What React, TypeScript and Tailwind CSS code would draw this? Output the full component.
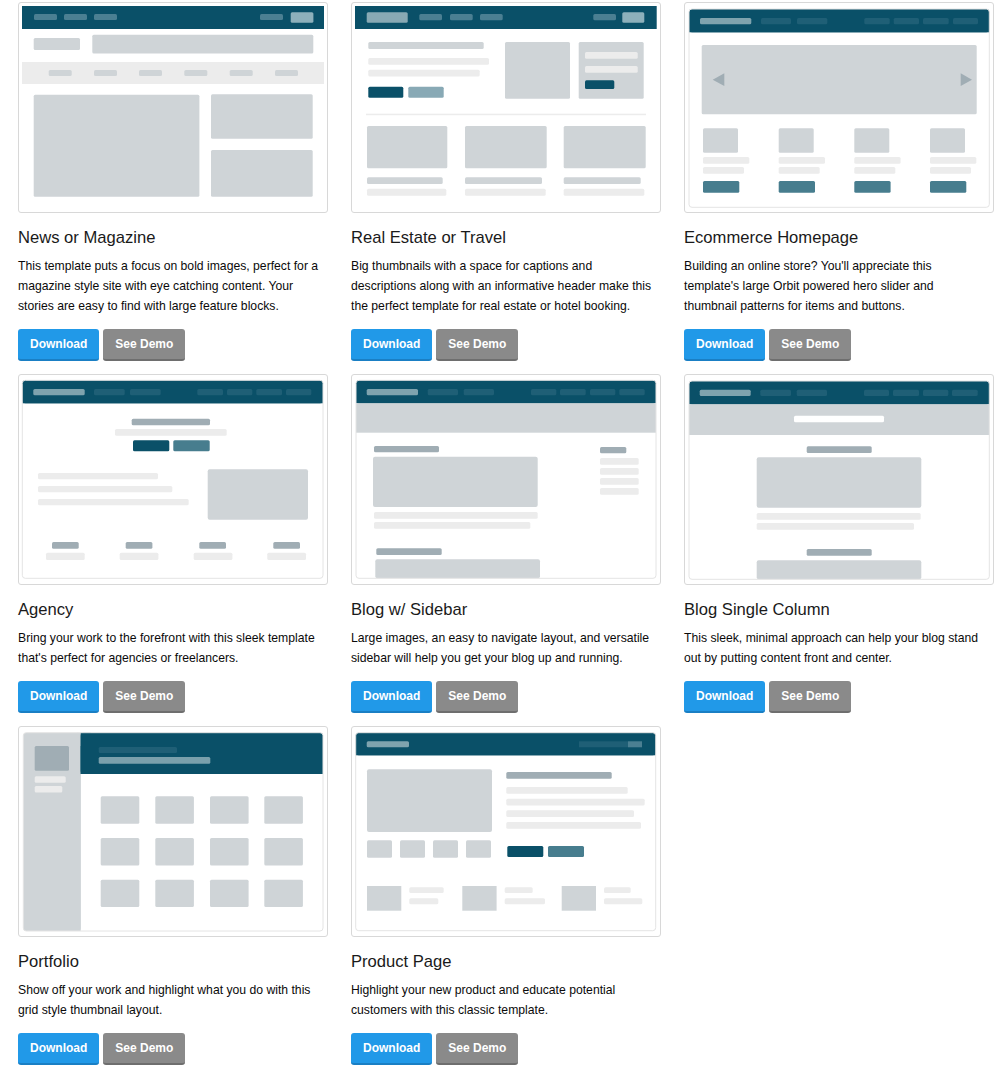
import type { ReactNode } from 'react';

const teal = '#0a5068';
const pill = '#4b7f92';
const pillDim = '#1f5f76';
const logo = '#7fa3ae';
const lightBtn = '#8db0bb';
const grey = '#cfd4d7';
const line = '#ececec';
const dark = '#a0adb4';
const tealBtn = '#477d8e';
const frameStroke = '#e4e4e4';

// one rounded block of the wireframe drawings
function B({ x, y, w, h, c = grey, r = 1.5 }: { x: number; y: number; w: number; h: number; c?: string; r?: number }) {
  return <rect x={x} y={y} width={w} height={h} rx={r} fill={c} />;
}

function Art({ children }: { children: ReactNode }) {
  return (
    <svg width="308" height="209" viewBox="1 1 308 209" className="block">
      {children}
    </svg>
  );
}

// framed page with a rounded teal header
function Frame({ x, y, w, h, hh, children }: { x: number; y: number; w: number; h: number; hh: number; children?: ReactNode }) {
  return (
    <>
      <rect x={x} y={y} width={w} height={h} rx={3} fill="#fff" />
      <rect x={x} y={y} width={w} height={hh} rx={3} fill={teal} />
      <rect x={x} y={y + 3} width={w} height={hh - 3} fill={teal} />
      {children}
      <rect x={x} y={y} width={w} height={h} rx={3} fill="none" stroke={frameStroke} strokeWidth={1} />
    </>
  );
}

function NewsArt() {
  return (
    <Art>
      <rect x={4} y={4} width={302} height={23} fill={teal} />
      {[16, 46, 76, 242].map((x) => (
        <B key={x} x={x} y={12} w={23} h={6} c={pill} />
      ))}
      <B x={272.7} y={10.3} w={22.7} h={10.4} c={lightBtn} />
      <B x={15.7} y={36} w={46.3} h={12} />
      <B x={74.3} y={32.7} w={221} h={18.7} />
      <rect x={4} y={60} width={302} height={22} fill={line} />
      {[30.7, 76, 121, 166.3, 211.7, 257].map((x) => (
        <B key={x} x={x} y={68} w={23} h={6} />
      ))}
      <B x={15.7} y={92.7} w={165.7} h={102} />
      <B x={193} y={92.3} w={101.7} h={44.4} />
      <B x={193} y={148} w={101.7} h={46.7} />
    </Art>
  );
}

function RealEstateArt() {
  return (
    <Art>
      <rect x={4} y={4} width={301.7} height={23} fill={teal} />
      <B x={15.7} y={10.3} w={41} h={10.4} c="#88a9b4" />
      {[68.3, 99, 129, 242.3].map((x) => (
        <B key={x} x={x} y={12} w={22.7} h={6.3} c={pill} />
      ))}
      <B x={271.3} y={10.3} w={22} h={10.4} c={lightBtn} />
      <B x={17.3} y={40} w={115.4} h={7} />
      <B x={17.3} y={56} w={120.7} h={6.7} c={line} />
      <B x={17.3} y={67.7} w={111.4} h={6.7} c={line} />
      <B x={17.3} y={84.7} w={35} h={11} c={teal} />
      <B x={57.3} y={84.7} w={35.4} h={11} c="#88a9b5" />
      <B x={154} y={40} w={65} h={56.7} />
      <B x={227.7} y={40} w={65} h={56.7} />
      <B x={234} y={50} w={52.7} h={6.7} c={line} />
      <B x={234} y={64} w={52.7} h={6.7} c={line} />
      <B x={234} y={78.3} w={29.3} h={8.7} c={teal} />
      <rect x={15} y={111.7} width={280} height={1.5} fill={line} />
      {[
        [16, 80.3, 75.7, 79.3],
        [114, 81.7, 77, 80.7],
        [212.7, 82, 77, 80.6],
      ].map(([x, w, t, l]) => (
        <g key={x}>
          <B x={x} y={124} w={w} h={42.3} />
          <B x={x} y={175.3} w={t} h={6.7} />
          <B x={x} y={186.7} w={l} h={7} c={line} />
        </g>
      ))}
    </Art>
  );
}

function EcommerceArt() {
  return (
    <Art>
      <Frame x={5} y={7} w={300.3} h={198.3} hh={23.3}>
        <B x={16} y={16} w={51.3} h={6.3} c={logo} />
        {[
          [77, 30],
          [113, 30.3],
          [180.3, 25.4],
          [209.7, 25.3],
          [239, 25.7],
          [269, 25],
        ].map(([x, w]) => (
          <B key={x} x={x} y={16} w={w} h={6.3} c={pillDim} />
        ))}
        <B x={17.7} y={43} w={275} h={69.3} />
        <polygon points="28.7,77.7 40.3,71.3 40.3,84" fill={dark} />
        <polygon points="276.7,71.3 288,77.7 276.7,84" fill={dark} />
        {[19, 94.7, 170.3, 246].map((x) => (
          <g key={x}>
            <B x={x} y={126.3} w={35} h={24.4} />
            <B x={x} y={155} w={46.3} h={6.7} c={line} />
            <B x={x} y={165} w={41} h={6.7} c={line} />
            <B x={x} y={179} w={36.3} h={11.7} c={tealBtn} />
          </g>
        ))}
      </Frame>
    </Art>
  );
}

function AgencyArt() {
  return (
    <Art>
      <Frame x={4.3} y={6.3} w={300.7} h={198} hh={23}>
        <B x={15.3} y={15} w={51.4} h={6.3} c={logo} />
        {[
          [76, 30.7],
          [112, 30.7],
          [179.3, 25.7],
          [209, 25.3],
          [238.3, 25.7],
          [268, 25.3],
        ].map(([x, w]) => (
          <B key={x} x={x} y={15} w={w} h={6.3} c={pillDim} />
        ))}
        <B x={113.7} y={44.7} w={78.3} h={6.6} c={dark} />
        <B x={97} y={55} w={111.7} h={6.7} c={line} />
        <B x={115} y={66.3} w={36.3} h={11} c={teal} />
        <B x={155.3} y={66.3} w={36.4} h={11} c={tealBtn} />
        <B x={20} y={99} w={120} h={6.3} c={line} />
        <B x={20} y={112} w={134.3} h={6.3} c={line} />
        <B x={20} y={125} w={150.7} h={6.3} c={line} />
        <B x={189.7} y={95.3} w={100.3} h={50.4} r={2} />
        {[
          [34, 28],
          [107.7, 101.7],
          [181.3, 175.7],
          [255.3, 249.3],
        ].map(([p, l]) => (
          <g key={p}>
            <B x={p} y={168} w={26.7} h={6.7} c={dark} />
            <B x={l} y={178.7} w={38.7} h={7.3} c={line} />
          </g>
        ))}
      </Frame>
    </Art>
  );
}

function BlogSidebarArt() {
  return (
    <Art>
      <Frame x={5} y={6.3} w={300} h={198} hh={23}>
        <B x={15.7} y={15} w={51.3} h={6.3} c={logo} />
        {[
          [76.7, 30.3],
          [112.7, 30.3],
          [180, 25.3],
          [209, 25.7],
          [239, 25.3],
          [268.3, 25.4],
        ].map(([x, w]) => (
          <B key={x} x={x} y={15} w={w} h={6.3} c={pillDim} />
        ))}
        <rect x={5} y={29.3} width={300} height={29.4} fill={grey} />
        <B x={23} y={72} w={65} h={6.3} c={dark} />
        <B x={22} y={82.7} w={164.7} h={50.3} r={2} />
        <B x={23} y={138} w={163.7} h={6.7} c={line} />
        <B x={23} y={148} w={156.3} h={6.7} c={line} />
        <B x={25.3} y={174.3} w={65.4} h={6.7} c={dark} />
        <B x={24.3} y={185.3} w={164.7} h={19} r={2} />
        <B x={249} y={73} w={26.3} h={6.3} c={dark} />
        {[84, 94, 104, 114].map((y) => (
          <B key={y} x={249} y={y} w={38.7} h={6.7} c={line} />
        ))}
      </Frame>
    </Art>
  );
}

function BlogSingleArt() {
  return (
    <Art>
      <Frame x={5} y={7} w={300.3} h={198.3} hh={23.3}>
        <B x={15.7} y={15.7} w={51} h={6.3} c={logo} />
        {[
          [76.3, 30.7],
          [112.7, 30.3],
          [180, 25],
          [209, 26],
          [239, 25.3],
          [268, 25.7],
        ].map(([x, w]) => (
          <B key={x} x={x} y={15.7} w={w} h={6.3} c={pillDim} />
        ))}
        <rect x={5} y={30.3} width={300.3} height={30.7} fill={grey} />
        <B x={110} y={41.7} w={90} h={6.6} c="#fff" />
        <B x={122.7} y={72.3} w={65} h={6.7} c={dark} />
        <B x={72.7} y={83.3} w={164.6} h={50.4} r={2} />
        <B x={72.7} y={139} w={164} h={6.7} c={line} />
        <B x={72.7} y={149} w={157.3} h={6.7} c={line} />
        <B x={122.7} y={175} w={65} h={6.7} c={dark} />
        <B x={72.7} y={186.3} w={164.6} h={19} r={2} />
      </Frame>
    </Art>
  );
}

function PortfolioArt() {
  return (
    <Art>
      <rect x={5.3} y={6.7} width={299.7} height={198.3} rx={3} fill="#fff" />
      <rect x={5.3} y={6.7} width={57.4} height={198.3} rx={3} fill={grey} />
      <rect x={59} y={6.7} width={3.7} height={198.3} fill={grey} />
      <rect x={62.7} y={6.7} width={242.3} height={41.3} rx={3} fill={teal} />
      <rect x={62.7} y={6.7} width={10} height={41.3} fill={teal} />
      <rect x={62.7} y={20} width={242.3} height={28} fill={teal} />
      <B x={16.7} y={20} w={34.3} h={24.7} c={dark} />
      <B x={16.7} y={50.3} w={31} h={6.4} c={line} />
      <B x={16.7} y={60} w={27.6} h={6.4} c={line} />
      <B x={80.7} y={21} w={78.3} h={6} c={pillDim} />
      <B x={80.7} y={31} w={111.6} h={6.7} c="#7aa0ac" />
      {[70.3, 112, 153.7].map((y) =>
        [82.7, 137.3, 192, 246.3].map((x) => <B key={`${x}-${y}`} x={x} y={y} w={38.6} h={27.4} />),
      )}
      <rect x={5.3} y={6.7} width={299.7} height={198.3} rx={3} fill="none" stroke={frameStroke} />
    </Art>
  );
}

function ProductArt() {
  return (
    <Art>
      <Frame x={4.7} y={6.7} w={300} h={198} hh={22.6}>
        <B x={15.7} y={15.3} w={42.3} h={6} c={logo} />
        <rect x={228} y={15.3} width={49} height={6} fill={pillDim} />
        <rect x={277} y={15.3} width={14} height={6} fill={pill} />
        <B x={16} y={43.3} w={125} h={62.7} r={2} />
        {[16, 49, 82, 115].map((x) => (
          <B key={x} x={x} y={114.3} w={25} h={17.4} />
        ))}
        <B x={155.3} y={46} w={105.4} h={6.7} c={dark} />
        <B x={155.3} y={61} w={121.4} h={6.7} c={line} />
        <B x={155.3} y={72.7} w={138.4} h={6.7} c={line} />
        <B x={155.3} y={84.3} w={127.7} h={6.7} c={line} />
        <B x={155.3} y={96} w={134.7} h={6.7} c={line} />
        <B x={156.3} y={120} w={36} h={11} c={teal} />
        <B x={197} y={120} w={36} h={11} c={tealBtn} />
        {[
          [16, 58.3, 34.4, 29],
          [111.3, 153.7, 28, 40.3],
          [210.7, 253, 26.7, 38.3],
        ].map(([x, lx, w1, w2]) => (
          <g key={x}>
            <rect x={x} y={160} width={34.3} height={24.7} fill={grey} />
            <B x={lx} y={161.3} w={w1} h={5.7} c={line} />
            <B x={lx} y={172.3} w={w2} h={6} c={line} />
          </g>
        ))}
      </Frame>
    </Art>
  );
}

// descriptions keep the line breaks of the original page
const templates = [
  {
    title: 'News or Magazine',
    desc: [
      'This template puts a focus on bold images, perfect for a',
      'magazine style site with eye catching content. Your',
      'stories are easy to find with large feature blocks.',
    ],
    art: <NewsArt />,
  },
  {
    title: 'Real Estate or Travel',
    desc: [
      'Big thumbnails with a space for captions and',
      'descriptions along with an informative header make this',
      'the perfect template for real estate or hotel booking.',
    ],
    art: <RealEstateArt />,
  },
  {
    title: 'Ecommerce Homepage',
    desc: [
      "Building an online store? You'll appreciate this",
      "template's large Orbit powered hero slider and",
      'thumbnail patterns for items and buttons.',
    ],
    art: <EcommerceArt />,
  },
  {
    title: 'Agency',
    desc: ['Bring your work to the forefront with this sleek template', "that's perfect for agencies or freelancers."],
    art: <AgencyArt />,
  },
  {
    title: 'Blog w/ Sidebar',
    desc: ['Large images, an easy to navigate layout, and versatile', 'sidebar will help you get your blog up and running.'],
    art: <BlogSidebarArt />,
  },
  {
    title: 'Blog Single Column',
    desc: ['This sleek, minimal approach can help your blog stand', 'out by putting content front and center.'],
    art: <BlogSingleArt />,
  },
  {
    title: 'Portfolio',
    desc: ['Show off your work and highlight what you do with this', 'grid style thumbnail layout.'],
    art: <PortfolioArt />,
  },
  {
    title: 'Product Page',
    desc: ['Highlight your new product and educate potential', 'customers with this classic template.'],
    art: <ProductArt />,
  },
];

export default function App() {
  return (
    <div className="min-h-screen bg-white font-['Liberation_Sans',Arial,sans-serif] text-[#0a0a0a]">
      <div className="grid grid-cols-[repeat(3,310px)] items-start gap-x-[23px] gap-y-[13px] pl-[18px] pt-[2px]">
        {templates.map((t) => (
          <div key={t.title} className="flex flex-col items-start">
            <div className="h-[211px] w-[310px] rounded-[3px] border border-[#d8d8d8] bg-white">{t.art}</div>
            <h3 className="mt-[15px] text-[16.6px] leading-[20px] font-normal text-[#1a1a1a]">{t.title}</h3>
            <p className="mt-[8px] text-[12.2px] leading-[20px] whitespace-nowrap">
              {t.desc.map((l, i) => (
                <span key={i} className="block">
                  {l}
                </span>
              ))}
            </p>
            <div className="mt-[13px] flex gap-[4px]">
              <button className="h-[32px] cursor-pointer rounded-[3px] border-b-2 border-[#1a7fc4] bg-[#2199e8] px-3 pt-[1px] text-[12px] leading-[29px] font-bold text-white">
                Download
              </button>
              <button className="h-[32px] cursor-pointer rounded-[3px] border-b-2 border-[#6e6e6e] bg-[#8a8a8a] px-3 pt-[1px] text-[12px] leading-[29px] font-bold text-white">
                See Demo
              </button>
            </div>
          </div>
        ))}
      </div>
    </div>
  );
}
